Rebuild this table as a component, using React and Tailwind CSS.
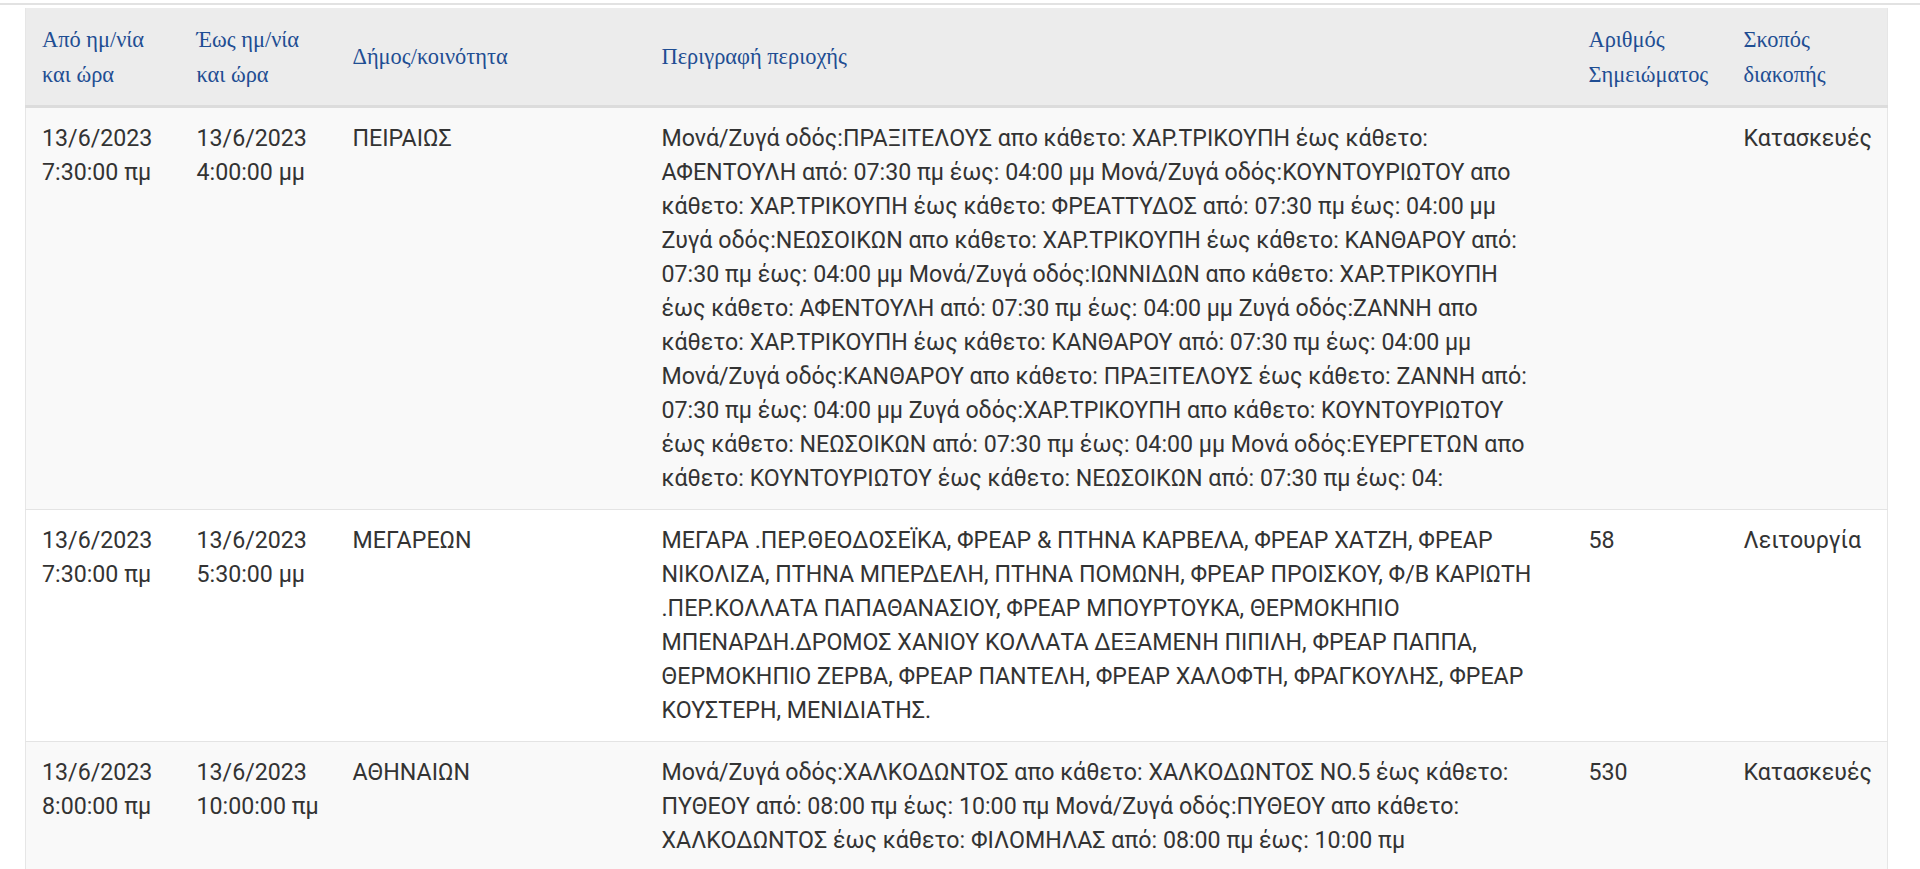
import React from 'react';

const headers = [
    ['Από ημ/νία', 'και ώρα'],
    ['Έως ημ/νία', 'και ώρα'],
    ['Δήμος/κοινότητα'],
    ['Περιγραφή περιοχής'],
    ['Αριθμός', 'Σημειώματος'],
    ['Σκοπός', 'διακοπής'],
];

const rows = [
    {
        from: ['13/6/2023', '7:30:00 πμ'],
        to: ['13/6/2023', '4:00:00 μμ'],
        municipality: 'ΠΕΙΡΑΙΩΣ',
        description: [
            'Μονά/Ζυγά οδός:ΠΡΑΞΙΤΕΛΟΥΣ απο κάθετο: ΧΑΡ.ΤΡΙΚΟΥΠΗ έως κάθετο:',
            'ΑΦΕΝΤΟΥΛΗ από: 07:30 πμ έως: 04:00 μμ Μονά/Ζυγά οδός:ΚΟΥΝΤΟΥΡΙΩΤΟΥ απο',
            'κάθετο: ΧΑΡ.ΤΡΙΚΟΥΠΗ έως κάθετο: ΦΡΕΑΤΤΥΔΟΣ από: 07:30 πμ έως: 04:00 μμ',
            'Ζυγά οδός:ΝΕΩΣΟΙΚΩΝ απο κάθετο: ΧΑΡ.ΤΡΙΚΟΥΠΗ έως κάθετο: ΚΑΝΘΑΡΟΥ από:',
            '07:30 πμ έως: 04:00 μμ Μονά/Ζυγά οδός:ΙΩΝΝΙΔΩΝ απο κάθετο: ΧΑΡ.ΤΡΙΚΟΥΠΗ',
            'έως κάθετο: ΑΦΕΝΤΟΥΛΗ από: 07:30 πμ έως: 04:00 μμ Ζυγά οδός:ΖΑΝΝΗ απο',
            'κάθετο: ΧΑΡ.ΤΡΙΚΟΥΠΗ έως κάθετο: ΚΑΝΘΑΡΟΥ από: 07:30 πμ έως: 04:00 μμ',
            'Μονά/Ζυγά οδός:ΚΑΝΘΑΡΟΥ απο κάθετο: ΠΡΑΞΙΤΕΛΟΥΣ έως κάθετο: ΖΑΝΝΗ από:',
            '07:30 πμ έως: 04:00 μμ Ζυγά οδός:ΧΑΡ.ΤΡΙΚΟΥΠΗ απο κάθετο: ΚΟΥΝΤΟΥΡΙΩΤΟΥ',
            'έως κάθετο: ΝΕΩΣΟΙΚΩΝ από: 07:30 πμ έως: 04:00 μμ Μονά οδός:ΕΥΕΡΓΕΤΩΝ απο',
            'κάθετο: ΚΟΥΝΤΟΥΡΙΩΤΟΥ έως κάθετο: ΝΕΩΣΟΙΚΩΝ από: 07:30 πμ έως: 04:',
        ],
        note: '',
        purpose: 'Κατασκευές',
    },
    {
        from: ['13/6/2023', '7:30:00 πμ'],
        to: ['13/6/2023', '5:30:00 μμ'],
        municipality: 'ΜΕΓΑΡΕΩΝ',
        description: [
            'ΜΕΓΑΡΑ .ΠΕΡ.ΘΕΟΔΟΣΕΪΚΑ, ΦΡΕΑΡ & ΠΤΗΝΑ ΚΑΡΒΕΛΑ, ΦΡΕΑΡ ΧΑΤΖΗ, ΦΡΕΑΡ',
            'ΝΙΚΟΛΙΖΑ, ΠΤΗΝΑ ΜΠΕΡΔΕΛΗ, ΠΤΗΝΑ ΠΟΜΩΝΗ, ΦΡΕΑΡ ΠΡΟΙΣΚΟΥ, Φ/Β ΚΑΡΙΩΤΗ',
            '.ΠΕΡ.ΚΟΛΛΑΤΑ ΠΑΠΑΘΑΝΑΣΙΟΥ, ΦΡΕΑΡ ΜΠΟΥΡΤΟΥΚΑ, ΘΕΡΜΟΚΗΠΙΟ',
            'ΜΠΕΝΑΡΔΗ.ΔΡΟΜΟΣ ΧΑΝΙΟΥ ΚΟΛΛΑΤΑ ΔΕΞΑΜΕΝΗ ΠΙΠΙΛΗ, ΦΡΕΑΡ ΠΑΠΠΑ,',
            'ΘΕΡΜΟΚΗΠΙΟ ΖΕΡΒΑ, ΦΡΕΑΡ ΠΑΝΤΕΛΗ, ΦΡΕΑΡ ΧΑΛΟΦΤΗ, ΦΡΑΓΚΟΥΛΗΣ, ΦΡΕΑΡ',
            'ΚΟΥΣΤΕΡΗ, ΜΕΝΙΔΙΑΤΗΣ.',
        ],
        note: '58',
        purpose: 'Λειτουργία',
    },
    {
        from: ['13/6/2023', '8:00:00 πμ'],
        to: ['13/6/2023', '10:00:00 πμ'],
        municipality: 'ΑΘΗΝΑΙΩΝ',
        description: [
            'Μονά/Ζυγά οδός:ΧΑΛΚΟΔΩΝΤΟΣ απο κάθετο: ΧΑΛΚΟΔΩΝΤΟΣ ΝΟ.5 έως κάθετο:',
            'ΠΥΘΕΟΥ από: 08:00 πμ έως: 10:00 πμ Μονά/Ζυγά οδός:ΠΥΘΕΟΥ απο κάθετο:',
            'ΧΑΛΚΟΔΩΝΤΟΣ έως κάθετο: ΦΙΛΟΜΗΛΑΣ από: 08:00 πμ έως: 10:00 πμ',
        ],
        note: '530',
        purpose: 'Κατασκευές',
    },
];

const Lines = ({ lines }) => (
    <>
        {lines.map((l, i) => (
            <div key={i} className="whitespace-nowrap">{l}</div>
        ))}
    </>
);

export default function App() {
    return (
        <div className="min-h-screen bg-white">
            <div className="pt-[3px]">
                <div className="h-[2px] bg-[#e2e2e2]" />
            </div>

            <div className="ml-[25px] mt-[3px] w-[1863px]">
                <table className="w-full table-fixed border-collapse border-x border-[#e6e6e6]">
                    <colgroup>
                        <col className="w-[155px]" />
                        <col className="w-[156px]" />
                        <col className="w-[309px]" />
                        <col className="w-[927px]" />
                        <col className="w-[155px]" />
                        <col />
                    </colgroup>
                    <thead>
                        <tr className="bg-[#ececec] border-b-[3px] border-[#dcdcdc]">
                            {headers.map((h, i) => (
                                <th
                                    key={i}
                                    className="h-[98px] px-[16px] pt-[1px] text-left align-middle font-normal text-[22.4px] leading-[35px] text-[#1f4e93] font-['Liberation_Serif','Times_New_Roman',serif]"
                                >
                                    {h.map((line, j) => (
                                        <div key={j} className="whitespace-nowrap">{line}</div>
                                    ))}
                                </th>
                            ))}
                        </tr>
                    </thead>
                    <tbody className="font-['Roboto','Liberation_Sans',sans-serif] text-[23.2px] leading-[34px] text-[#333333]">
                        {rows.map((r, i) => (
                            <tr
                                key={i}
                                className={`${i % 2 === 0 ? 'bg-[#f9f9f9]' : 'bg-white'} border-t border-[#e4e4e4]`}
                            >
                                <td className="px-[16px] pt-[13px] pb-[14px] align-top"><Lines lines={r.from} /></td>
                                <td className="px-[16px] pt-[13px] pb-[14px] align-top"><Lines lines={r.to} /></td>
                                <td className="px-[16px] pt-[13px] pb-[14px] align-top">{r.municipality}</td>
                                <td className="px-[16px] pt-[13px] pb-[14px] align-top"><Lines lines={r.description} /></td>
                                <td className="px-[16px] pt-[13px] pb-[14px] align-top">{r.note}</td>
                                <td className="px-[16px] pt-[13px] pb-[14px] align-top whitespace-nowrap">{r.purpose}</td>
                            </tr>
                        ))}
                    </tbody>
                </table>
            </div>
        </div>
    );
}
